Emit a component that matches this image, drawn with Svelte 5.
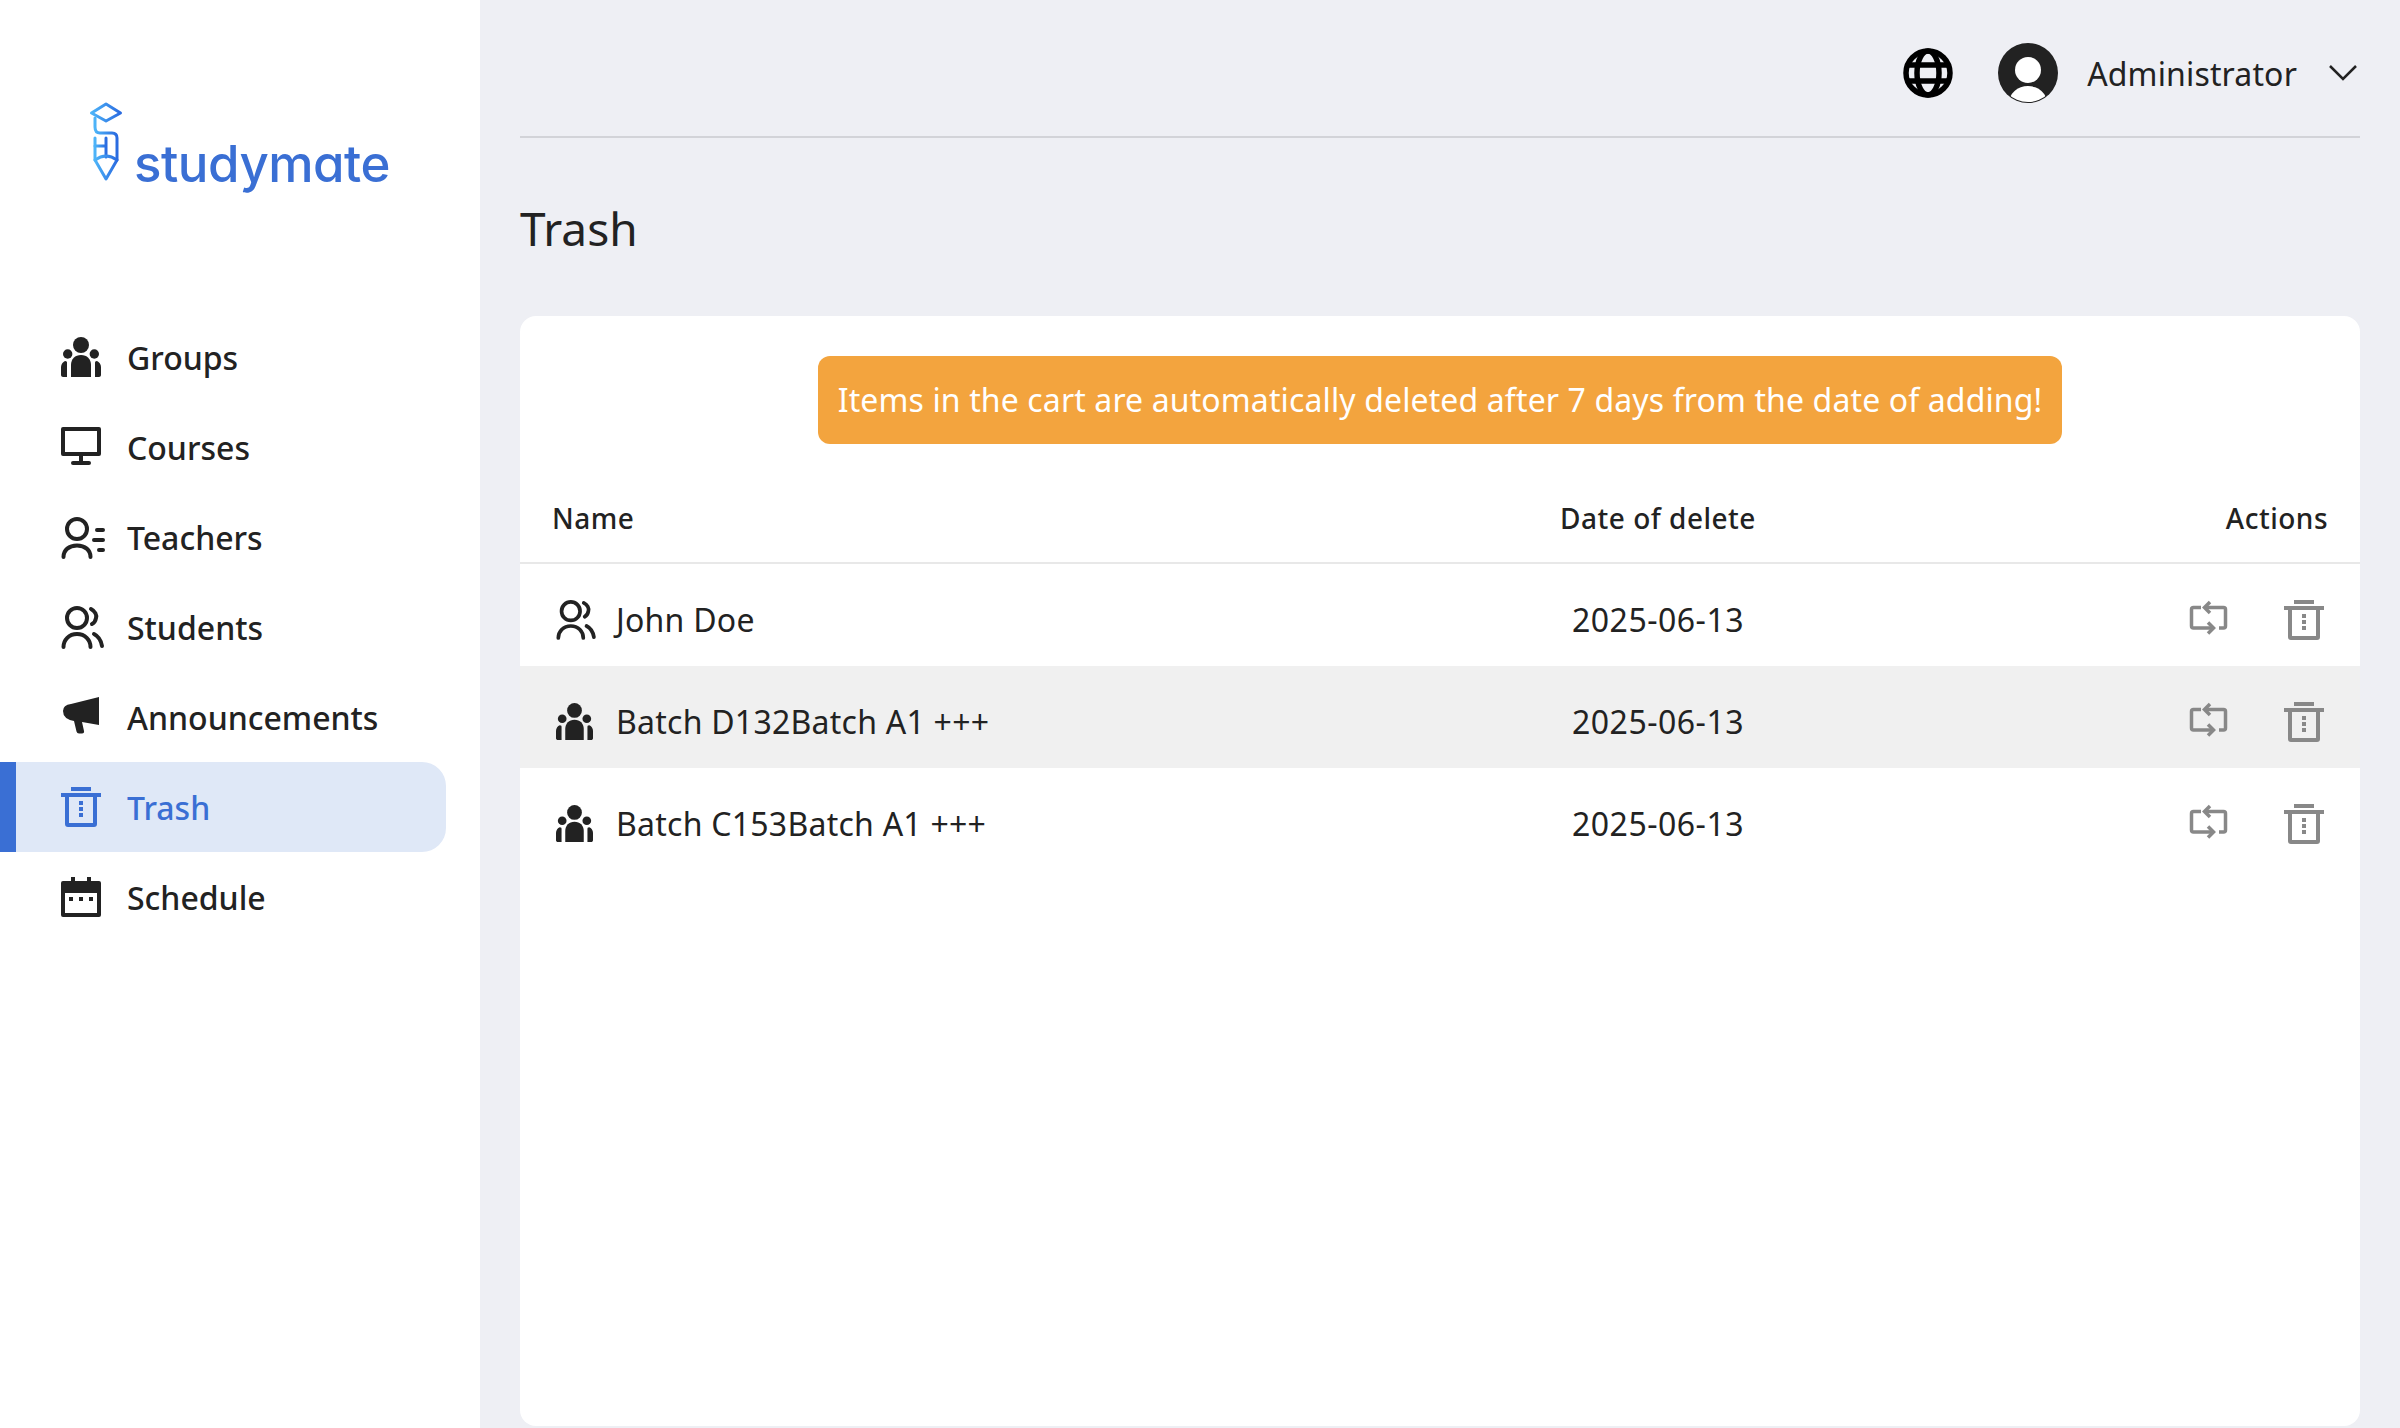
<script>
	const nav = [
		{ label: 'Groups', icon: 'groups' },
		{ label: 'Courses', icon: 'monitor' },
		{ label: 'Teachers', icon: 'teacher' },
		{ label: 'Students', icon: 'students' },
		{ label: 'Announcements', icon: 'megaphone' },
		{ label: 'Trash', icon: 'trash', active: true },
		{ label: 'Schedule', icon: 'calendar' }
	];

	const rows = [
		{ name: 'John Doe', icon: 'students', date: '2025-06-13' },
		{ name: 'Batch D132Batch A1 +++', icon: 'groups', date: '2025-06-13', shaded: true },
		{ name: 'Batch C153Batch A1 +++', icon: 'groups', date: '2025-06-13' }
	];
</script>

{#snippet icon(name)}
	<svg class="icon" viewBox="0 0 40 40" aria-hidden="true">
		{#if name === 'groups'}
			<g fill="currentColor">
				<circle cx="20" cy="8" r="8" />
				<circle cx="6.7" cy="17" r="4.7" />
				<circle cx="33.3" cy="17" r="4.7" />
				<path d="M10 40V28C10 22 14 18 20 18S30 22 30 28V40Z" />
				<path d="M0 38V30C0 27 2 25 4 24C6 24 6 25 6 26V40H2C1 40 0 39 0 38Z" />
				<path d="M40 38V30C40 27 38 25 36 24C34 24 34 25 34 26V40H38C39 40 40 39 40 38Z" />
			</g>
		{:else if name === 'monitor'}
			<g fill="currentColor">
				<path d="M2 0H38A2 2 0 0 1 40 2V27A2 2 0 0 1 38 29H2A2 2 0 0 1 0 27V2A2 2 0 0 1 2 0ZM4 4V25H36V4Z" fill-rule="evenodd" />
				<rect x="18" y="29" width="4" height="6" />
				<rect x="10" y="34" width="20" height="4" rx="2" />
			</g>
		{:else if name === 'teacher'}
			<g fill="none" stroke="currentColor" stroke-width="4" stroke-linecap="round">
				<circle cx="16" cy="12" r="10" />
				<path d="M2.500 40C2.500 33 8 28.500 16 28.500S29.500 33 29.500 40" />
				<path d="M36 13H42M33 23H42M38 33H42" />
			</g>
		{:else if name === 'students'}
			<g fill="none" stroke="currentColor" stroke-width="4" stroke-linecap="round">
				<circle cx="16" cy="11" r="10" />
				<path d="M2.500 40C2.500 33 8 27 16 27S29.500 33 29.500 40" />
				<path d="M30 2C34 4 36 8 35 11C34.500 14 33 16 31 17" />
				<path d="M33 27C37 29 40 33 41 39" />
			</g>
		{:else if name === 'megaphone'}
			<path fill="currentColor" d="M38 0V28L21 25L23 34Q23.500 36 21 36.500L18 36.500Q16 36.500 15.500 34.500L13 24Q2 22 2 14Q2 8 10 7Z" />
		{:else if name === 'trash'}
			<g fill="currentColor">
				<rect x="10" y="0" width="20" height="4" />
				<rect x="0" y="6" width="40" height="4" />
				<path d="M4 8H8V36H32V8H36V37A3 3 0 0 1 33 40H7A3 3 0 0 1 4 37Z" />
				<rect x="18" y="14" width="4" height="4" />
				<rect x="18" y="20" width="4" height="4" />
				<rect x="18" y="26" width="4" height="4" />
			</g>
		{:else if name === 'calendar'}
			<path fill="currentColor" fill-rule="evenodd" d="M10 0H14V4H26V0H30V4H38A2 2 0 0 1 40 6V38A2 2 0 0 1 38 40H2A2 2 0 0 1 0 38V6A2 2 0 0 1 2 4H10ZM4 16V36H36V16ZM8 20H12V24H8ZM18 20H22V24H18ZM28 20H32V24H28Z" />
		{:else if name === 'restore'}
			<g fill="none" stroke="currentColor" stroke-width="3.500">
				<path d="M11 7.500H3.500A2 2 0 0 0 1.500 9.500V26A2 2 0 0 0 3.500 28H22" />
				<path d="M29 28H33.500A2 2 0 0 0 35.500 26V9.500A2 2 0 0 0 33.500 7.500H15" />
				<path d="M20 2L14.500 7.500L20 13" />
				<path d="M18 22.500L23.500 28L18 33.500" />
			</g>
		{/if}
	</svg>
{/snippet}

<div class="layout">
	<aside class="sidebar">
		<div class="logo">
			<svg class="logo-mark" viewBox="0 0 38 82" width="38" height="82" aria-hidden="true">
				<defs>
					<linearGradient id="logo-grad" x1="0" x2="1" y1="0" y2="0">
						<stop offset="0" stop-color="#4db4f8" />
						<stop offset="1" stop-color="#2a6be0" />
					</linearGradient>
				</defs>
				<g fill="none" stroke="url(#logo-grad)" stroke-width="3" stroke-linejoin="round" stroke-linecap="round">
					<path d="M2.500 11L17 2L31.500 11L17 19Z" />
					<path d="M29.500 13V20" />
					<path d="M6 16V25Q6 31 11 31H23Q28 31 28 36V58L17 77L6 58V36" />
					<path d="M17 36V55M6 44H17" />
					<path d="M6 58Q17 50 28 58" />
				</g>
			</svg>
			<span class="logo-text">studymate</span>
		</div>

		<nav class="nav">
			{#each nav as item}
				<a class="nav-item" class:active={item.active} href="#top">
					{@render icon(item.icon)}
					<span>{item.label}</span>
				</a>
			{/each}
		</nav>
	</aside>

	<main class="main">
		<header class="topbar">
			<svg class="globe" viewBox="0 0 50 50" width="50" height="50" aria-hidden="true">
				<g fill="none" stroke="#000" stroke-width="5.500">
					<circle cx="25" cy="25" r="22" />
					<ellipse cx="25" cy="25" rx="11" ry="22" />
					<path d="M4 17H46M4 33H46" />
				</g>
			</svg>
			<svg class="avatar" viewBox="0 0 60 60" width="60" height="60" aria-hidden="true">
				<defs>
					<clipPath id="avatar-clip"><circle cx="30" cy="30" r="29" /></clipPath>
				</defs>
				<circle cx="30" cy="30" r="30" fill="#222" />
				<circle cx="30" cy="27" r="13" fill="#fff" />
				<ellipse cx="30" cy="60" rx="19" ry="17" fill="#fff" clip-path="url(#avatar-clip)" />
			</svg>
			<span class="username">Administrator</span>
			<svg class="chevron" viewBox="0 0 28 16" width="28" height="16" aria-hidden="true">
				<path d="M1 1L14 14L27 1" fill="none" stroke="#222" stroke-width="2.500" />
			</svg>
		</header>

		<h1 class="title">Trash</h1>

		<section class="card">
			<div class="notice-wrap">
				<p class="notice">Items in the cart are automatically deleted after 7 days from the date of adding!</p>
			</div>

			<div class="row head">
				<div>Name</div>
				<div class="date">Date of delete</div>
				<div class="actions">Actions</div>
			</div>

			{#each rows as row}
				<div class="row" class:shaded={row.shaded}>
					<div class="name">
						{@render icon(row.icon)}
						<span>{row.name}</span>
					</div>
					<div class="date">{row.date}</div>
					<div class="actions">
						<button class="action">{@render icon('restore')}</button>
						<button class="action">{@render icon('trash')}</button>
					</div>
				</div>
			{/each}
		</section>
	</main>
</div>

<style>
	:global(body) {
		background: #eeeff4;
		font-family: 'Noto Sans', 'Open Sans', sans-serif;
		color: #222;
	}

	.layout {
		display: flex;
		height: 100vh;
		overflow: hidden;
	}

	.sidebar {
		flex: 0 0 480px;
		background: #fff;
	}

	.logo {
		display: flex;
		align-items: flex-start;
		height: 262px;
		padding: 102px 0 0 89px;
		box-sizing: border-box;
		gap: 7px;
	}

	.logo-text {
		margin-top: 32px;
		font-family: Inter, sans-serif;
		font-feature-settings: 'cv11';
		font-size: 51px;
		line-height: 60px;
		font-weight: 500;
		letter-spacing: -0.5px;
		color: #3a6fd4;
	}

	.nav {
		display: flex;
		flex-direction: column;
		padding-top: 50px;
	}

	.nav-item {
		display: flex;
		align-items: center;
		gap: 26px;
		height: 90px;
		width: 446px;
		box-sizing: border-box;
		padding-left: 61px;
		font-size: 32px;
		font-weight: 500;
		color: #222;
		text-decoration: none;
	}

	.nav-item .icon {
		width: 40px;
		height: 40px;
	}

	.nav-item.active {
		border-left: 16px solid #3a6fd4;
		padding-left: 45px;
		border-radius: 0 24px 24px 0;
		background: #dfe8f7;
		color: #3a6fd4;
	}

	.icon {
		flex: none;
		overflow: visible;
	}

	.main {
		flex: 1;
		display: flex;
		flex-direction: column;
		padding: 0 40px 2px;
		min-width: 0;
	}

	.topbar {
		display: flex;
		align-items: center;
		justify-content: flex-end;
		height: 138px;
		padding-top: 10px;
		box-sizing: border-box;
		flex: none;
		border-bottom: 2px solid #d2d3d8;
	}

	.globe {
		margin-right: 45px;
	}

	.avatar {
		margin-right: 29px;
	}

	.username {
		font-size: 32px;
		letter-spacing: 0.15px;
		color: #222;
		margin-right: 32px;
	}

	.chevron {
		margin-right: 3px;
	}

	.title {
		margin: 0;
		padding-top: 57px;
		height: 178px;
		box-sizing: border-box;
		flex: none;
		font-size: 46px;
		font-weight: 400;
		line-height: 66px;
		color: #222;
	}

	.card {
		flex: 1;
		background: #fff;
		border-radius: 16px;
	}

	.notice-wrap {
		display: flex;
		justify-content: center;
		padding-top: 40px;
	}

	.notice {
		margin: 0;
		height: 88px;
		line-height: 88px;
		padding: 0 20px;
		border-radius: 12px;
		background: #f3a43e;
		color: #fff;
		font-size: 32px;
		letter-spacing: 0.12px;
		white-space: nowrap;
	}

	.row {
		display: grid;
		grid-template-columns: 988px 236px 1fr;
		align-items: center;
		height: 102px;
		padding: 9px 36px 0 32px;
		box-sizing: border-box;
		font-size: 32px;
		letter-spacing: 0.5px;
	}

	.row.head {
		height: 120px;
		padding: 30px 32px 0;
		align-items: center;
		border-bottom: 2px solid #e8e8e8;
		font-size: 28px;
		font-weight: 500;
		letter-spacing: 0.5px;
	}

	.row.shaded {
		background: #f0f0f0;
	}

	.date {
		text-align: center;
		white-space: nowrap;
	}

	.name {
		display: flex;
		align-items: center;
		gap: 23px;
		padding-left: 4px;
		letter-spacing: 0.25px;
	}

	.name .icon {
		width: 37px;
		height: 37px;
	}

	.actions {
		display: flex;
		justify-content: flex-end;
		align-items: center;
		gap: 54px;
	}

	.action {
		display: flex;
		padding: 0;
		border: none;
		background: none;
		color: #888;
	}

	.action .icon {
		width: 40px;
		height: 40px;
	}
</style>
